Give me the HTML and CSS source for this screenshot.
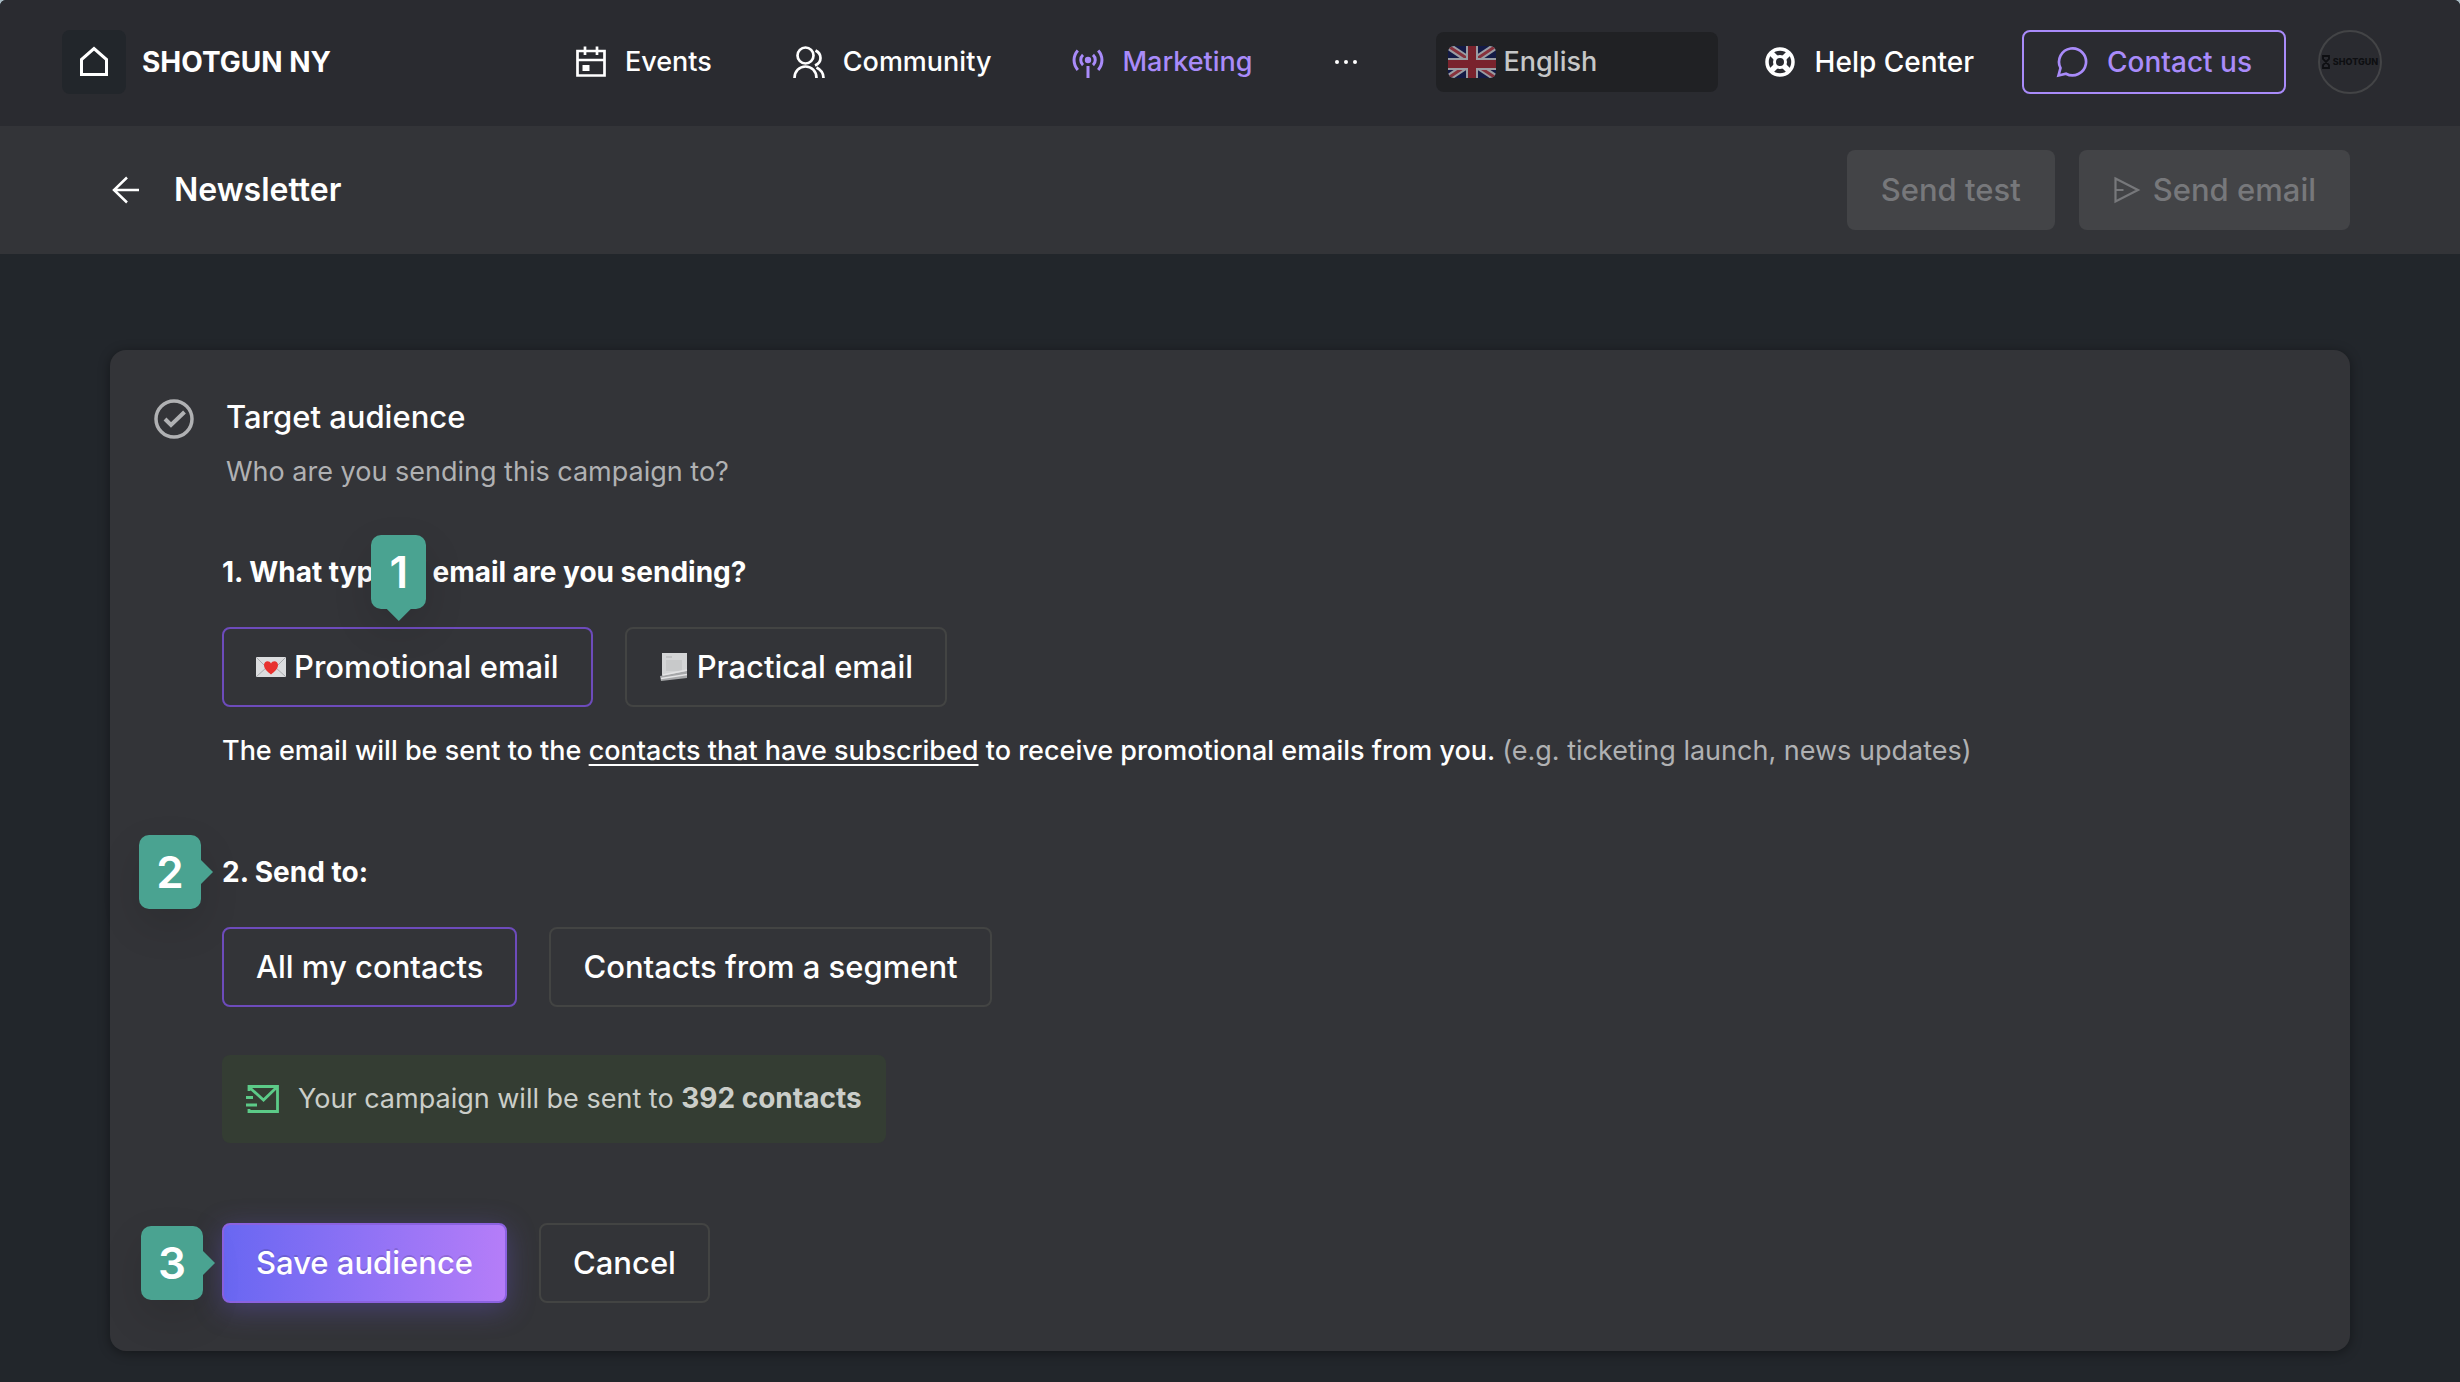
FILE: index.html
```html
<!DOCTYPE html>
<html lang="en">
<head>
<meta charset="utf-8">
<meta name="viewport" content="width=device-width, initial-scale=1">
<title>Newsletter</title>
<link rel="stylesheet" href="styles.css">
</head>
<body>
<header class="topbar">
  <div class="brand">
    <a class="home" href="#" aria-label="Home">
      <svg width="32" height="32" viewBox="0 0 32 32" fill="none" stroke="currentColor" stroke-width="3"><path d="M3.500 28.500V13.500L16 2.500l12.500 11v15z"/></svg>
    </a>
    <span class="brand-name">SHOTGUN NY</span>
  </div>
  <nav class="nav">
    <a class="nav-link" href="#">
      <svg width="32" height="32" viewBox="0 0 32 32" fill="none" stroke="currentColor" stroke-width="2.700"><path d="M2.500 5h27v24.500h-27zM2.500 14h27M10 .500v8.500M22 .500v8.500"/><path d="M7.500 19h7v6h-7z" fill="currentColor" stroke="none"/></svg>
      Events
    </a>
    <a class="nav-link" href="#">
      <svg width="32" height="32" viewBox="0 0 32 32" fill="none" stroke="currentColor" stroke-width="2.700"><circle cx="12.500" cy="9.500" r="8"/><path d="M1.500 32c0-7 5-11.500 11-11.500S23.500 25 23.500 32M22.500 4.500c3 1.500 5 4 5 7.500s-2 6-5.500 7.500M23.500 21.500c4 2 7 5.500 7 10.500"/></svg>
      Community
    </a>
    <a class="nav-link nav-link-active" href="#" aria-current="page">
      <svg width="32" height="32" viewBox="0 0 32 32" fill="none" stroke="currentColor" stroke-width="3"><circle cx="16" cy="14" r="3.200" fill="currentColor" stroke="none"/><path d="M16 20V32M11 19.200C8 16.500 8 11.500 11 8.800M21 19.200c3-2.700 3-7.700 0-10.400M5.800 24C.800 18 .800 10 5.800 4.500M26.200 24c5-6 5-14 0-19.500"/></svg>
      Marketing
    </a>
    <button class="more" type="button" aria-label="More">
      <svg width="24" height="6" viewBox="0 0 24 6" fill="currentColor"><circle cx="3" cy="3" r="2"/><circle cx="12" cy="3" r="2"/><circle cx="21" cy="3" r="2"/></svg>
    </button>
  </nav>
  <div class="tools">
    <label class="language">
      <svg class="flag" width="48" height="32" viewBox="0 0 48 32" aria-hidden="true"><path fill="#131a45" d="M0 0h48v32H0z"/><path d="M0 0l48 32M48 0L0 32" stroke="#9a9da3" stroke-width="7"/><path d="M0 0l20 13M48 0L30 12M0 32l18-12M48 32L28 19" stroke="#87313c" stroke-width="3"/><path d="M24 0v32M0 18h48" stroke="#9a9da3" stroke-width="12"/><path d="M24 0v32M0 18h48" stroke="#79232d" stroke-width="8"/></svg>
      <select class="language-select" aria-label="Language" disabled><option>English</option></select>
    </label>
    <a class="help" href="#">
      <svg width="32" height="32" viewBox="0 0 32 32" fill="none" stroke="currentColor"><circle cx="16" cy="16" r="13" stroke-width="3.500"/><circle cx="16" cy="16" r="5.500" stroke-width="3"/><path d="M7 7l5 5M25 7l-5 5M7 25l5-5M25 25l-5-5" stroke-width="5.500"/></svg>
      Help Center
    </a>
    <button class="contact" type="button">
      <svg width="32" height="32" viewBox="0 0 32 32" fill="none" stroke="currentColor" stroke-width="2.700"><path d="M2.500 29.500L4.500 22A13.500 13.500 0 1 1 10 27.700z"/></svg>
      Contact us
    </button>
    <a class="avatar" href="#" aria-label="Account">
      <svg width="8" height="14" viewBox="0 0 8 14" fill="none" stroke="currentColor" stroke-width="1.800"><path d="M1 1h6v3L1 10v3h6v-3L1 4z"/></svg>
      <span>SHOTGUN</span>
    </a>
  </div>
</header>

<section class="subbar">
  <a class="back" href="#" aria-label="Back">
    <svg width="32" height="32" viewBox="0 0 32 32" fill="none" stroke="currentColor" stroke-width="2.500"><path d="M29 16H4M17 3.500L4 16l13 12.500"/></svg>
  </a>
  <h1 class="page-title">Newsletter</h1>
  <button class="btn btn-disabled" type="button" disabled>Send test</button>
  <button class="btn btn-disabled" type="button" disabled>
    <svg width="28" height="28" viewBox="0 0 28 28" fill="none" stroke="currentColor" stroke-width="2.200"><path d="M2.500 2.500L25 14 2.500 25.500zM2.500 14h8"/></svg>
    Send email
  </button>
</section>

<main class="page">
  <section class="card">
    <svg class="status" width="40" height="40" viewBox="0 0 40 40" fill="none" stroke="currentColor" stroke-width="3.500"><circle cx="20" cy="20" r="18"/><path d="M11 20l6 6L30.500 13" stroke-width="4"/></svg>
    <div class="content">
      <h2 class="title">Target audience</h2>
      <p class="subtitle">Who are you sending this campaign to?</p>

      <h3 class="question">1. What type of email are you sending?</h3>
      <div class="options">
        <button class="btn btn-outline btn-selected" type="button" aria-pressed="true">
          <svg class="emoji" width="30" height="28" viewBox="0 0 30 28"><path fill="#dcdddf" d="M0 4h30v20H0z"/><path d="M0 4l11 11M30 4L19 15M0 24l11-10M30 24L19 14" stroke="#a9abae" fill="none"/><path fill="#e8322f" d="M15 21.500C11 18.500 8 15.500 8 12c0-4.500 5.500-5 7-1.500 1.500-3.500 7-3 7 1.500 0 3.500-3 6.500-7 9.500z"/></svg>
          Promotional email
          <span class="step step-above">1</span>
        </button>
        <button class="btn btn-outline" type="button" aria-pressed="false">
          <svg class="emoji" width="30" height="28" viewBox="0 0 30 28"><path fill="#d4d5d6" d="M3 0h25v22L3 24z"/><path fill="#c8c9ca" d="M7 7h16v11H7z"/><path d="M7 4h6" stroke="#b0b1b3"/><path fill="#a6a7a9" d="M1 23l27-5v7L2 28z"/><path d="M4 22l24-5M2 25.500l26-4" stroke="#e4e4e5" stroke-width="1.500"/></svg>
          Practical email
        </button>
      </div>
      <p class="hint">The email will be sent to the <u>contacts that have subscribed</u> to receive promotional emails from you. <span class="muted">(e.g. ticketing launch, news updates)</span></p>

      <h3 class="question question-next">2. Send to:<span class="step step-left">2</span></h3>
      <div class="options">
        <button class="btn btn-outline btn-selected" type="button" aria-pressed="true">All my contacts</button>
        <button class="btn btn-outline" type="button" aria-pressed="false">Contacts from a segment</button>
      </div>

      <p class="notice">
        <svg width="36" height="32" viewBox="2 0 36 32" fill="none" stroke="#5ccb88" stroke-width="2.800"><path d="M5 8V3.500h28.500v25H5V26M5 4l14.500 13L33 4M2 14.500h7M2 22h11"/></svg>
        <span>Your campaign will be sent to <strong>392 contacts</strong></span>
      </p>

      <div class="options">
        <button class="btn btn-primary" type="button">Save audience<span class="step step-left">3</span></button>
        <button class="btn btn-outline" type="button">Cancel</button>
      </div>
    </div>
  </section>
</main>
</body>
</html>
```

FILE: styles.css
```css
* { box-sizing: border-box; }

html { background: #a9bcc4; }

body {
  margin: 0;
  min-height: 100vh;
  border-radius: 6px 6px 0 0;
  overflow: hidden;
  background: #22262b;
  color: #fff;
  font: 400 27px/40px Inter, "Liberation Sans", sans-serif;
}

a { color: inherit; text-decoration: none; }
button { font: inherit; color: inherit; cursor: pointer; }
h1, h2, h3, p { margin: 0; }
svg { flex: none; }

.topbar {
  display: flex;
  align-items: center;
  height: 126px;
  padding: 0 78px 2px 62px;
  background: #2a2b30;
}

.brand { display: flex; align-items: center; gap: 16px; }
.home {
  display: flex;
  align-items: center;
  justify-content: center;
  width: 64px;
  height: 64px;
  border-radius: 8px;
  background: #22262b;
}
.brand-name { font-size: 28px; font-weight: 700; }

.nav {
  display: flex;
  align-items: center;
  justify-content: flex-end;
  flex: 1;
  gap: 81px;
  margin-right: 78px;
  font-weight: 500;
}
.nav-link { display: flex; align-items: center; gap: 18px; }
.nav-link-active { color: #a98bfa; }
.more { padding: 0; border: 0; background: none; display: flex; }

.tools { display: flex; align-items: center; font-size: 28px; font-weight: 500; }
.language {
  display: flex;
  align-items: center;
  gap: 8px;
  width: 282px;
  height: 60px;
  padding: 0 12px;
  margin-right: 46px;
  border-radius: 8px;
  background: #202124;
}
.flag { border-radius: 6px; }
.language-select {
  flex: 1;
  min-width: 0;
  padding: 0;
  border: 0;
  appearance: none;
  background: none;
  font: inherit;
  font-size: 27px;
  color: #c6c7c8;
  opacity: 1;
}
.help { display: flex; align-items: center; gap: 19px; margin-right: 48px; }
.contact {
  display: flex;
  align-items: center;
  gap: 19px;
  height: 64px;
  padding: 0 32px;
  border: 2px solid #a98bfa;
  border-radius: 8px;
  background: none;
  color: #a98bfa;
}
.avatar {
  display: flex;
  align-items: center;
  justify-content: center;
  gap: 3px;
  width: 64px;
  height: 64px;
  margin-left: 32px;
  border: 2px solid #434446;
  border-radius: 50%;
  color: #0e0f12;
  font-size: 9px;
  font-weight: 800;
}

.subbar {
  display: flex;
  align-items: center;
  gap: 24px;
  height: 128px;
  padding: 0 110px;
  background: #333438;
}
.back { display: flex; }
.page-title { flex: 1; padding-left: 8px; font-size: 32px; font-weight: 600; }

.btn {
  position: relative;
  display: flex;
  align-items: center;
  gap: 8px;
  height: 80px;
  padding: 0 32px;
  border: 2px solid transparent;
  border-radius: 8px;
  font-size: 31px;
  font-weight: 500;
}
.btn-disabled { gap: 12px; background: #434447; color: #77787b; cursor: default; }
.btn-outline { border-color: #434443; background: none; }
.btn-selected { border-color: #6d4bbb; }
.btn-primary {
  border-color: #8b62e0;
  background: linear-gradient(90deg, #6967f2, #b57df8);
  box-shadow: 0 6px 28px rgba(110, 90, 220, .35);
  text-shadow: 0 -2px 0 rgba(0, 0, 0, .12);
}

.page { padding: 96px 110px 31px; }
.card {
  display: flex;
  gap: 28px;
  padding: 44px 44px 48px;
  border-radius: 16px;
  background: #333438;
  box-shadow: 0 2px 12px rgba(0, 0, 0, .4);
}
.status { margin-top: 5px; color: #b0b1b3; }
.content { flex: 1; min-width: 0; }

.title { padding-left: 4px; font-size: 31px; font-weight: 500; line-height: 46px; }
.subtitle { padding: 12px 0 0 4px; color: #b0b1b3; }
.question {
  position: relative;
  width: max-content;
  margin-top: 60px;
  font-size: 28px;
  font-weight: 700;
}
.question-next { margin-top: 81px; }
.options { display: flex; gap: 32px; margin-top: 35px; }
.hint { margin-top: 24px; font-weight: 500; }
.hint u { text-underline-offset: 4px; }
.muted { color: #b0b1b3; font-weight: 400; }

.notice {
  display: flex;
  align-items: center;
  gap: 16px;
  width: max-content;
  margin: 48px 0 80px;
  padding: 24px;
  border-radius: 8px;
  background: #343d33;
  color: #cbcec9;
}
.notice strong { font-size: 28px; line-height: 32px; }

.step {
  position: absolute;
  width: 62px;
  padding: 17px 0;
  border-radius: 10px;
  background: #4aa391;
  box-shadow: 0 16px 40px rgba(0, 0, 0, .12);
  color: #fff;
  font-size: 44px;
  font-weight: 600;
  line-height: 40px;
  text-align: center;
  text-shadow: none;
}
.step::after {
  content: "";
  position: absolute;
  background: inherit;
}
.step-above { bottom: 96px; left: 50%; width: 55px; margin-left: -36px; }
.step-above::after {
  top: 100%;
  left: calc(50% - 12px);
  width: 24px;
  height: 12px;
  clip-path: polygon(0 0, 100% 0, 50% 100%);
}
.step-left { top: calc(50% - 37px); right: calc(100% + 21px); }
.step-left::after {
  left: 100%;
  top: calc(50% - 12px);
  width: 12px;
  height: 24px;
  clip-path: polygon(0 0, 100% 50%, 0 100%);
}
```
